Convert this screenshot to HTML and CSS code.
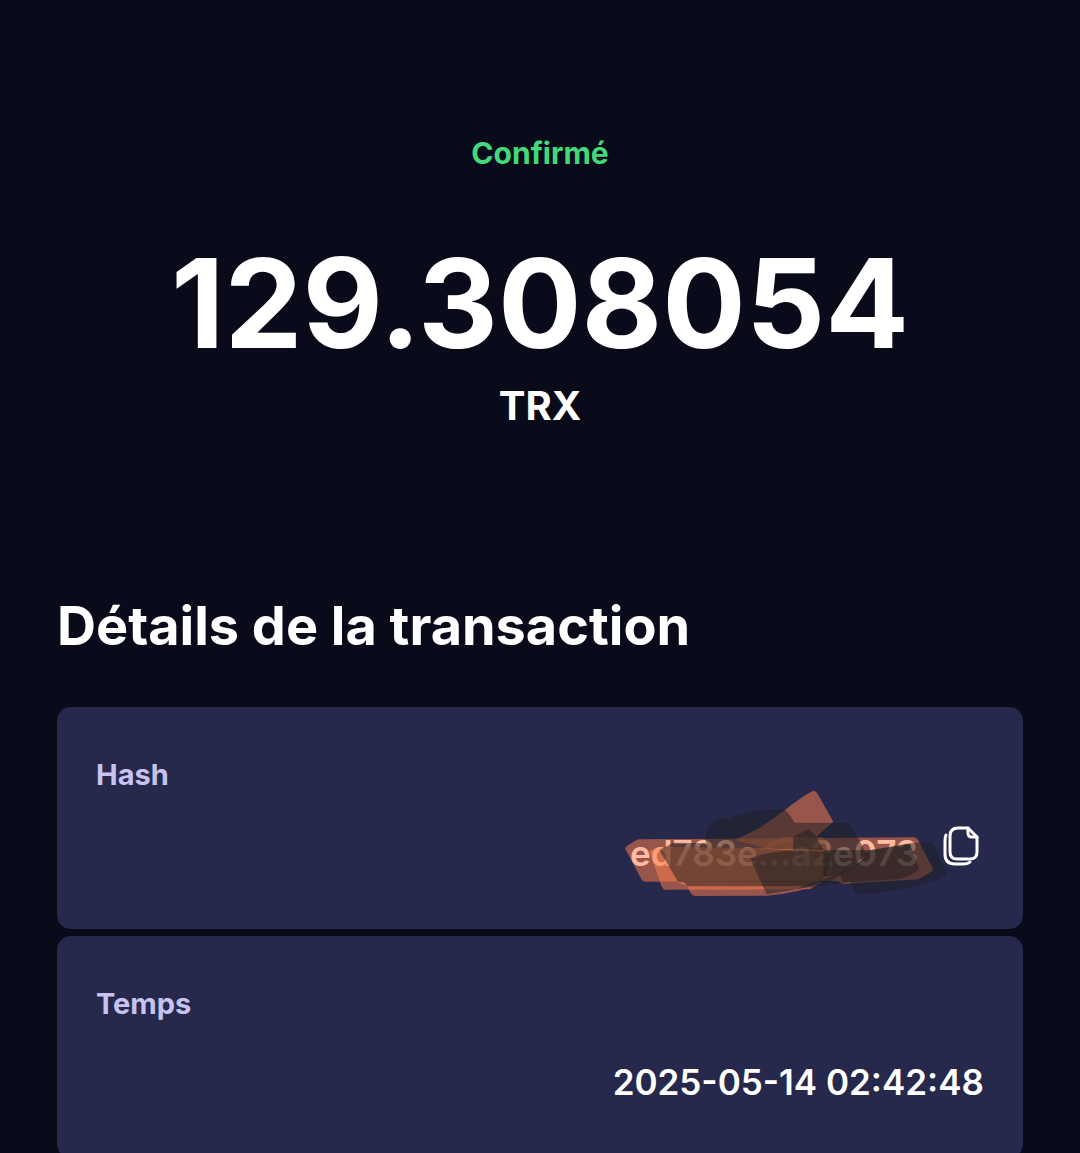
FILE: index.html
```html
<!DOCTYPE html>
<html lang="fr">
  <head>
    <meta charset="UTF-8" />
    <meta name="viewport" content="width=device-width, initial-scale=1.0" />
    <title>Détails de la transaction</title>
    <link rel="stylesheet" href="styles.css">
  </head>
  <body>
    <main class="screen">
      <header class="summary">
        <p class="status">Confirmé</p>
        <p class="amount">129.308054</p>
        <p class="currency">TRX</p>
      </header>

      <h1>Détails de la transaction</h1>

      <dl class="details">
        <div class="card">
          <dt>Hash</dt>
          <dd class="hash-row">
            <span class="hash">
              ed783e...a2e073
              <!-- marker strokes over the hash -->
              <svg class="marker" viewBox="0 0 1050 390" aria-hidden="true">
                <g class="marker-orange">
                  <path d="M45 205Q50 196 85 178L912 172Q920 172 926 184L970 268Q966 276 925 298L700 311L680 303L104 305Q98 305 94 297Z" />
                  <path d="M118 212L150 200L465 205Q480 180 525 172L640 172L668 250Q665 290 600 328L162 329L154 318Z" />
                  <path d="M200 306L640 306Q560 342 470 347L255 348Q246 347 240 337L232 319Z" />
                  <path d="M375 180L450 143L525 90Q575 50 608 33Q617 32 622 40L670 125L620 170L560 180L470 205Z" />
                </g>
                <g class="marker-dark">
                  <path d="M285 178Q286 142 330 115L345 120Q430 80 525 90L535 100L555 128L705 129Q716 129 722 140L745 175L770 225L690 285L640 290L640 210L430 205L290 190Z" />
                  <path d="M148 210L190 188L290 190L430 205L540 210L655 215Q675 280 620 310L600 318L232 319L222 306L204 305Z" />
                  <path d="M420 235Q480 212 550 212V170L596 148L615 165L640 210L770 210L765 240L690 285L660 305L560 328L470 343Z" />
                  <path d="M680 285L760 240L770 212L910 188L960 187Q967 188 971 198L1011 280Q1010 290 980 300Q900 330 745 344L735 333L720 305L560 328L600 310Z" />
                  <path d="M690 285L765 235L770 212L900 192L928 265Q910 290 860 298L700 308Z" />
                </g>
              </svg>
            </span>
            <button class="copy" type="button" aria-label="Copier le hash">
              <svg viewBox="0 0 40 40" aria-hidden="true">
                <path d="M24 2H14Q6 2 6 10V26Q6 33 13 33H26Q33 33 33 26V11Z" />
                <path d="M24 2V7Q24 11 28 11H33" />
                <path d="M2 9Q1 11 1 15V28Q1 38 11 38H19Q24 38 26 36" />
              </svg>
            </button>
          </dd>
        </div>

        <div class="card">
          <dt>Temps</dt>
          <dd>2025-05-14 02:42:48</dd>
        </div>
      </dl>
    </main>
  </body>
</html>
```
FILE: styles.css
```css
* {
  box-sizing: border-box;
  margin: 0;
  padding: 0;
}

body {
  font-family: Inter, "Open Sans", sans-serif;
  background-color: #090b1b;
  color: white;
}

.screen {
  height: 100vh;
  padding: 133px 57px 0;
  overflow-y: auto;
  scrollbar-width: none;
}

.summary {
  text-align: center;
  margin-bottom: 160px;
}

.status {
  color: #42da78;
  font-size: 30px;
  font-weight: 700;
  line-height: 40px;
  margin-bottom: 55px;
}

.amount {
  font-size: 124px;
  font-weight: 700;
  line-height: 150px;
}

.currency {
  font-size: 40px;
  font-weight: 700;
  line-height: 56px;
}

h1 {
  font-size: 54px;
  font-weight: 700;
  line-height: 64px;
  margin-bottom: 49px;
}

.details {
  display: flex;
  flex-direction: column;
  gap: 7px;
}

.card {
  background-color: #26284c;
  border-radius: 14px;
  padding: 48px 39px 52px;
}

dt {
  color: #c6c3f0;
  font-size: 29px;
  font-weight: 700;
  line-height: 40px;
  margin-bottom: 34px;
}

dd {
  font-size: 35px;
  font-weight: 600;
  line-height: 48px;
  text-align: right;
}

.hash-row {
  display: flex;
  justify-content: flex-end;
  align-items: flex-start;
  gap: 26px;
}

.hash {
  position: relative;
}

.marker {
  position: absolute;
  top: -49px;
  right: -42px;
  width: 350px;
  height: 130px;
}

.marker-orange {
  fill: #ff7e4a;
  fill-opacity: 0.52;
}

.marker-dark {
  fill: #1c1d20;
  fill-opacity: 0.5;
}

.copy {
  width: 40px;
  height: 40px;
  margin-top: -3px;
  border: none;
  background: none;
  cursor: pointer;
}

.copy svg {
  display: block;
  width: 40px;
  height: 40px;
  overflow: visible;
  fill: none;
  stroke: white;
  stroke-width: 3;
  stroke-linecap: round;
  stroke-linejoin: round;
}
```
